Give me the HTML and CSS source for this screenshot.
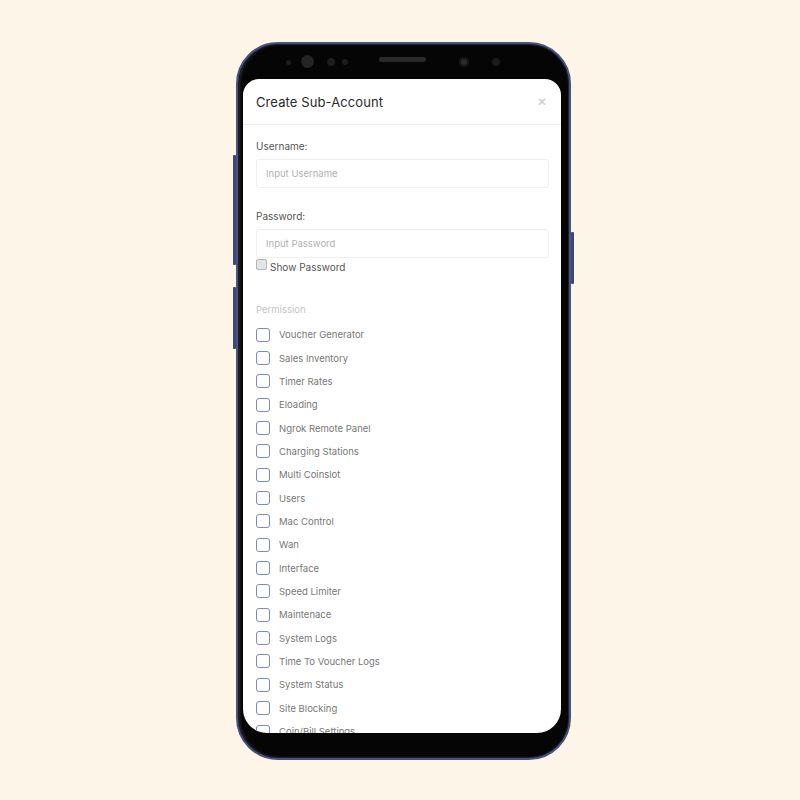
FILE: index.html
```html
<!DOCTYPE html>
<html>
<head>
<meta charset="utf-8">
<link rel="stylesheet" href="styles.css">
</head>
<body>
<div class="phone">
  <span class="btn btn-l1"></span>
  <span class="btn btn-l2"></span>
  <span class="btn btn-r1"></span>
  <div class="bezel-top">
    <span class="dot d1"></span>
    <span class="dot d2"></span>
    <span class="dot d3"></span>
    <span class="dot d4"></span>
    <span class="speaker"></span>
    <span class="dot cam"></span>
    <span class="dot d5"></span>
  </div>
  <div class="screen">
    <div class="modal-header">
      <div class="title">Create Sub-Account</div>
      <div class="close">&#x2715;</div>
    </div>
    <div class="modal-body">
      <div class="label">Username:</div>
      <div class="input">Input Username</div>
      <div class="label pw">Password:</div>
      <div class="input">Input Password</div>
      <div class="show"><span class="native-cb"></span><span>Show Password</span></div>
      <div class="perm">Permission</div>
      <ul class="list">
        <li><span class="cb"></span>Voucher Generator</li>
        <li><span class="cb"></span>Sales Inventory</li>
        <li><span class="cb"></span>Timer Rates</li>
        <li><span class="cb"></span>Eloading</li>
        <li><span class="cb"></span>Ngrok Remote Panel</li>
        <li><span class="cb"></span>Charging Stations</li>
        <li><span class="cb"></span>Multi Coinslot</li>
        <li><span class="cb"></span>Users</li>
        <li><span class="cb"></span>Mac Control</li>
        <li><span class="cb"></span>Wan</li>
        <li><span class="cb"></span>Interface</li>
        <li><span class="cb"></span>Speed Limiter</li>
        <li><span class="cb"></span>Maintenace</li>
        <li><span class="cb"></span>System Logs</li>
        <li><span class="cb"></span>Time To Voucher Logs</li>
        <li><span class="cb"></span>System Status</li>
        <li><span class="cb"></span>Site Blocking</li>
        <li><span class="cb"></span>Coin/Bill Settings</li>
      </ul>
    </div>
  </div>
</div>
</body>
</html>
```
FILE: styles.css
```css
html, body {
  margin: 0;
  padding: 0;
  background: #fdf5e8;
  width: 800px;
  height: 800px;
  overflow: hidden;
  font-family: Inter, "Noto Sans", sans-serif;
}
.phone {
  position: relative;
  box-sizing: border-box;
  margin: 42px 0 0 236px;
  width: 335px;
  height: 718px;
  padding: 35px 8px 25px 5px;
  background: #050505;
  border-radius: 42px;
  border: 2px solid #48537e;
  box-shadow: inset 0 0 0 1px #1b1f2e, inset 2px 0 3px rgba(255,255,255,0.15);
}
.btn {
  position: absolute;
  width: 3px;
  background: #3f4870;
  border-radius: 1px;
}
.btn-l1 { left: -5px; top: 111px; height: 110px; }
.btn-l2 { left: -5px; top: 243px; height: 62px; }
.btn-r1 { right: -5px; top: 188px; height: 52px; }
.bezel-top {
  position: absolute;
  left: 0;
  top: 0;
  width: 100%;
  height: 34px;
}
.dot {
  position: absolute;
  border-radius: 50%;
  background: #1c1c1c;
}
.d1 { left: 48px; top: 16px; width: 5px; height: 5px; }
.d2 { left: 63px; top: 11px; width: 13px; height: 13px; background: #242424; }
.d3 { left: 89px; top: 14px; width: 8px; height: 8px; }
.d4 { left: 104px; top: 15px; width: 6px; height: 6px; }
.speaker {
  position: absolute;
  left: 141px;
  top: 13px;
  width: 47px;
  height: 5px;
  border-radius: 3px;
  background: #2a2a2a;
}
.cam { left: 221px; top: 13px; width: 10px; height: 10px; background: #2b2b2b; box-shadow: inset 0 0 0 2px #141414; }
.d5 { left: 254px; top: 14px; width: 8px; height: 8px; }
.screen {
  width: 318px;
  height: 654px;
  background: #fff;
  border-radius: 16px 16px 24px 24px;
  overflow: hidden;
}
.modal-header {
  height: 45px;
  border-bottom: 1px solid #ececec;
  display: flex;
  align-items: center;
  justify-content: space-between;
  padding: 0 14px 0 13px;
}
.title {
  font-size: 13px;
  color: #2a2a2a;
  letter-spacing: 0.1px;
}
.close {
  font-size: 12px;
  color: #c8c8c8;
}
.modal-body {
  padding: 14px 12px 0 13px;
}
.label {
  font-size: 10px;
  color: #555;
  height: 14px;
  line-height: 14px;
}
.label.pw { margin-top: 21px; }
.input {
  box-sizing: border-box;
  margin-top: 6px;
  height: 29px;
  border: 1px solid #eeeeee;
  border-radius: 3px;
  padding-left: 9px;
  font-size: 9.5px;
  color: #b0b0b0;
  display: flex;
  align-items: center;
}
.show {
  display: flex;
  align-items: flex-start;
  gap: 3px;
  font-size: 10px;
  color: #555;
  height: 14px;
}
.native-cb {
  margin-top: 1px;
  width: 9px;
  height: 9px;
  border: 1px solid #b5b5b5;
  background: #e4e4e4;
  border-radius: 2px;
}
.show span:last-child { margin-top: 3px; }
.perm {
  margin-top: 31px;
  font-size: 9.5px;
  color: #c4c4c4;
  height: 14px;
  line-height: 14px;
}
.list {
  list-style: none;
  margin: 6px 0 0 0;
  padding: 0;
}
.list li {
  display: flex;
  align-items: center;
  height: 23.35px;
  font-size: 9.5px;
  color: #777;
}
.cb {
  box-sizing: border-box;
  width: 14px;
  height: 14px;
  border: 1.3px solid #7c88c8;
  border-radius: 3px;
  margin-right: 9px;
}
```
